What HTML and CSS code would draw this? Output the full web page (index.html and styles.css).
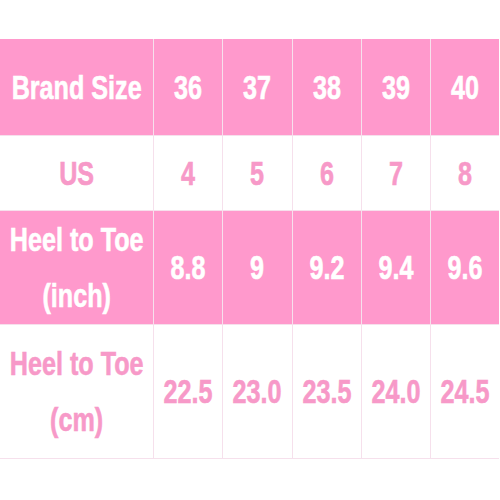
FILE: index.html
```html
<!DOCTYPE html>
<html>
<head>
<meta charset="utf-8">
<link rel="stylesheet" href="styles.css">
</head>
<body>
<div class="page">
<table class="chart">
  <tr class="pink r1">
    <td class="label"><span class="t">Brand Size</span></td>
    <td><span class="t">36</span></td><td><span class="t">37</span></td><td><span class="t">38</span></td><td><span class="t">39</span></td><td><span class="t">40</span></td>
  </tr>
  <tr class="white r2">
    <td class="label"><span class="t">US</span></td>
    <td><span class="t">4</span></td><td><span class="t">5</span></td><td><span class="t">6</span></td><td><span class="t">7</span></td><td><span class="t">8</span></td>
  </tr>
  <tr class="pink r3">
    <td class="label"><span class="t">Heel to Toe</span><span class="t">(inch)</span></td>
    <td><span class="t">8.8</span></td><td><span class="t">9</span></td><td><span class="t">9.2</span></td><td><span class="t">9.4</span></td><td><span class="t">9.6</span></td>
  </tr>
  <tr class="white r4">
    <td class="label"><span class="t">Heel to Toe</span><span class="t">(cm)</span></td>
    <td><span class="t">22.5</span></td><td><span class="t">23.0</span></td><td><span class="t">23.5</span></td><td><span class="t">24.0</span></td><td><span class="t">24.5</span></td>
  </tr>
</table>
</div>
</body>
</html>
```
FILE: styles.css
```css
html, body {
  margin: 0;
  padding: 0;
  background: #ffffff;
}
.page {
  padding-top: 39px;
  width: 500px;
}
.chart {
  border-collapse: collapse;
  width: 499px;
  table-layout: fixed;
  font-family: "Liberation Sans", Arial, sans-serif;
  font-weight: bold;
  font-size: 34px;
}
.chart td {
  border: 1px solid #f6e0ec;
  text-align: center;
  vertical-align: middle;
  padding: 0;
  width: 68px;
}
.chart td.label {
  width: 153px;
}
.t {
  display: block;
  margin: 0 -30px;
  white-space: nowrap;
  text-align: center;
  line-height: 40px;
  transform: scaleX(0.74);
  -webkit-text-stroke: 0.6px currentColor;
}
.r3 .label .t {
  line-height: 56px;
}
.r4 .label .t {
  line-height: 56px;
}
.pink td {
  background: #ff99cc;
  color: #ffffff;
}
.white td {
  background: #ffffff;
  color: #f799c8;
}
.r1 { height: 96px; }
.r2 { height: 75px; }
.r3 { height: 114px; }
.r4 { height: 134px; }
.chart tr:first-child td { border-top: none; }
.chart td:first-child { border-left: none; }
.chart td:last-child { border-right: none; }
```
